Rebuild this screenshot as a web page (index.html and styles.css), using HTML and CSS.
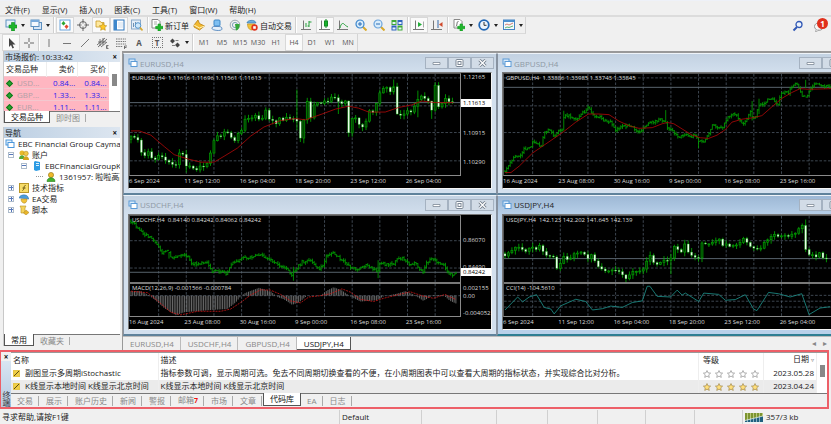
FILE: index.html
```html
<!DOCTYPE html>
<html lang="zh-CN">
<head>
<meta charset="utf-8">
<title>EBC Financial Group</title>
<link rel="stylesheet" href="styles.css">
</head>
<body>
<nav class="menubar">
  <button>文件(F)</button><button>显示(V)</button><button>插入(I)</button><button>图表(C)</button><button>工具(T)</button><button>窗口(W)</button><button>帮助(H)</button>
</nav>
<div class="toolrow">
  <div class="tools">
    <button class="tool drop" aria-label="新图表"><svg viewBox="0 0 12 12"><rect x="1" y="1" width="9" height="7" fill="#e8f2fb" stroke="#5b8fc0"/><path d="M6.500 3.500h3v2.500H12v3H9.500V12h-3V9H4V6h2.500z" fill="#1fb52c" stroke="#0b8a1c" stroke-width=".6"/></svg></button>
    <button class="tool drop" aria-label="模板"><svg viewBox="0 0 12 12"><rect x="3.500" y="3.500" width="8" height="7" fill="#d6e6f7" stroke="#5b8fc0"/><rect x="1" y="1" width="8" height="6.500" fill="#f3f8fd" stroke="#5b8fc0"/><path d="M1 1h8v2H1z" fill="#78aadb"/></svg></button>
    <i class="sep"></i>
    <button class="tool on" aria-label="市场报价"><svg viewBox="0 0 12 12"><rect x="1" y="1" width="10" height="10" fill="#fff" stroke="#69a3dc"/><path d="M2.500 4.500l2-2.500 2 2.500-2 2z" fill="#2aa52f"/><path d="M5.500 7.500l2-2 2 2-2 2.500z" fill="#e2482d"/></svg></button>
    <button class="tool" aria-label="数据窗口"><svg viewBox="0 0 12 12" fill="none" stroke="#666"><circle cx="6" cy="6" r="3.500"/><path d="M6 0v4.500M6 7.500V12M0 6h4.500M7.500 6H12"/></svg></button>
    <button class="tool on" aria-label="导航"><svg viewBox="0 0 12 12"><path d="M1 2h4l1 1.500h3V8H1z" fill="#ffe9a0" stroke="#c89b25" stroke-width=".8"/><path d="M8 4l1.200 2.500 2.500.3-1.900 1.800.5 2.700L8 10l-2.300 1.300.5-2.700L4.300 6.800l2.500-.3z" fill="#ffc926" stroke="#b98a10" stroke-width=".6"/></svg></button>
    <button class="tool on" aria-label="终端"><svg viewBox="0 0 12 12"><rect x="1" y="1" width="10" height="10" fill="#fff" stroke="#2e76bd"/><path d="M1 1h3v10H1z" fill="#3d87cc"/><path d="M5 4h5M5 6h5M5 8h5" stroke="#b9cfe6" stroke-width=".7"/></svg></button>
    <button class="tool" aria-label="策略测试"><svg viewBox="0 0 12 12"><rect x=".5" y="1" width="9" height="9" fill="#e5eef8" stroke="#8aa9c9"/><path d="M2.500 8V4M4.500 8V3" stroke="#7090b0"/><circle cx="7" cy="6.500" r="2.800" fill="#cfe8fb" stroke="#5695cc"/><path d="M9 8.500l2.500 3" stroke="#d8a92c" stroke-width="1.600"/></svg></button>
    <i class="sep"></i>
    <button class="tool label"><svg viewBox="0 0 12 12"><path d="M1 .5h6l2 2V9H1z" fill="#fff" stroke="#888"/><path d="M3 3h3M3 5h3" stroke="#888" stroke-width=".7"/><path d="M7 5h2.500v2.300H12v2.400H9.500V12H7V9.700H4.700V7.300H7z" fill="#1fb52c" stroke="#129a20" stroke-width=".6"/></svg>新订单</button>
    <button class="tool" aria-label="语言编辑器"><svg viewBox="0 0 12 12"><path d="M1 6l4-5 1.500 3.500L11.500 7 6.500 11 1 8z" fill="#f2b930" stroke="#b77f13" stroke-width=".8"/><path d="M1 6l5.500 3 5-2" fill="none" stroke="#fff2b8"/></svg></button>
    <button class="tool" aria-label="社区"><svg viewBox="0 0 12 12"><rect x="3" y="1" width="6" height="6" rx="1" fill="#7fc0f2" stroke="#3f88c7"/><path d="M1 9.500C1 7 3 7.500 6 7.500s5 0 5 2.500-10 1.500-10-.5z" fill="#e5f0fa" stroke="#3f78b7" stroke-width=".8"/></svg></button>
    <button class="tool" aria-label="信号"><svg viewBox="0 0 12 12" fill="none"><circle cx="6" cy="6" r="4.800" stroke="#9aa7b0"/><circle cx="6" cy="6" r="2.600" stroke="#7aa5b8"/><path d="M6 5l1 6.500C9.500 11 11 8 10.500 5z" fill="#35a83b"/></svg></button>
    <button class="tool label auto"><svg viewBox="0 0 12 12"><path d="M1 4c0-3 8-4 9 0z" fill="#6fb1e0" stroke="#3679ad" stroke-width=".7"/><path d="M1.500 5c0 4 2 6 4.500 6l3-6z" fill="#f2c33a" stroke="#b98a17" stroke-width=".6"/><circle cx="8.500" cy="8.500" r="3.200" fill="#e0351f"/><rect x="7.200" y="7.200" width="2.600" height="2.600" fill="#fff"/></svg>自动交易</button>
    <i class="sep"></i>
    <button class="tool" aria-label="柱状图"><svg viewBox="0 0 12 12" fill="none" stroke="#777"><path d="M2.500 1.500v9M0 10.500h10"/><path d="M5 8V4M8 2v6M8 3h2.500M8 7H6.500" stroke="#25a03a"/></svg></button>
    <button class="tool on" aria-label="蜡烛图"><svg viewBox="0 0 12 12" fill="none" stroke="#777"><path d="M2.500 1.500v9M0 10.500h11"/><path d="M7 0v9" stroke="#128a22"/><rect x="5.500" y="2" width="3" height="5" fill="#19b32c" stroke="#128a22"/></svg></button>
    <button class="tool" aria-label="折线图"><svg viewBox="0 0 12 12" fill="none" stroke="#777"><path d="M2.500 1.500v9M0 10.500h11"/><path d="M3 9c1-5 3-5 4-4s2 2 4 3" stroke="#25a03a"/></svg></button>
    <button class="tool" aria-label="放大"><svg viewBox="0 0 12 12"><path d="M7.500 7.500l4 4" stroke="#d8a92c" stroke-width="2"/><circle cx="5" cy="5" r="4" fill="#d8ecfb" stroke="#3c86cc" stroke-width="1.200"/><path d="M3 5h4M5 3v4" stroke="#2b6cb5"/></svg></button>
    <button class="tool" aria-label="缩小"><svg viewBox="0 0 12 12"><path d="M7.500 7.500l4 4" stroke="#d8a92c" stroke-width="2"/><circle cx="5" cy="5" r="4" fill="#d8ecfb" stroke="#6ba4dc" stroke-width="1.200"/><path d="M3 5h4" stroke="#2b6cb5"/></svg></button>
    <button class="tool" aria-label="平铺窗口"><svg viewBox="0 0 12 12"><path d="M.5 1h5v5h-5zM6.500 6.500h5v5h-5z" fill="#3faa36"/><path d="M6.500 1h5v5h-5zM.5 6.500h5v5h-5z" fill="#2f65bd"/><path d="M1.500 3h3v2h-3zM7.500 3h3v2h-3zM1.500 8.500h3v2h-3zM7.500 8.500h3v2h-3z" fill="#e8f3fb"/></svg></button>
    <i class="sep"></i>
    <button class="tool on" aria-label="自动滚动"><svg viewBox="0 0 12 12" fill="none" stroke="#777"><path d="M2.500 1.500v9M0 10.500h11"/><path d="M10.500 2.500v6" stroke="#aaa"/><path d="M5 3l4 2.500L5 8z" fill="#23ad38" stroke="none"/></svg></button>
    <button class="tool" aria-label="图表平移"><svg viewBox="0 0 12 12" fill="none" stroke="#777"><path d="M2.500 1.500v9M0 10.500h11"/><path d="M7 1v8" stroke="#3469a8"/><path d="M11.500 3L8 5.500 11.500 8z" fill="#d0482a" stroke="none"/></svg></button>
    <i class="sep"></i>
    <button class="tool drop" aria-label="指标"><svg viewBox="0 0 12 12"><path d="M1 .5h6l2 2V9H1z" fill="#fff" stroke="#888"/><path d="M5.500 2.500C3.500 2 4.500 6 3 7.500" fill="none" stroke="#444" stroke-width=".8"/><path d="M7 5h2.500v2.300H12v2.400H9.500V12H7V9.700H4.700V7.300H7z" fill="#1fb52c" stroke="#129a20" stroke-width=".6"/></svg></button>
    <button class="tool drop" aria-label="周期"><svg viewBox="0 0 12 12"><circle cx="6" cy="6" r="4.800" fill="#edf5fc" stroke="#2167b5" stroke-width="1.800"/><path d="M6 3v3.300h2.500" fill="none" stroke="#333"/></svg></button>
    <button class="tool drop" aria-label="模板列表"><svg viewBox="0 0 12 12"><rect x=".5" y="1" width="11" height="9.500" fill="#f4f8fc" stroke="#4584c2"/><path d="M.5 1h11v2H.5z" fill="#4b8fce"/><path d="M2 6l2-1 2 1 4-2" fill="none" stroke="#c5604a" stroke-width=".8"/><path d="M2 9l2-1 2 .5L10 7" fill="none" stroke="#38a04b" stroke-width=".8"/></svg></button>
  </div>
  <div class="right-tools">
    <button class="tool" aria-label="搜索"><svg viewBox="0 0 12 12"><circle cx="7" cy="4.500" r="3" fill="#eef4fd" stroke="#3158b5" stroke-width="1.300"/><path d="M5 7L1.500 10.500" stroke="#3158b5" stroke-width="2"/></svg></button>
    <button class="tool chat" aria-label="消息"><svg viewBox="0 0 12 12"><ellipse cx="5" cy="6.500" rx="4.500" ry="3.800" fill="#f7f7f7" stroke="#999"/><path d="M2 9.500L1.500 12 5 10" fill="#eee" stroke="#999" stroke-width=".7"/></svg><b class="badge">1</b></button>
  </div>
</div>
<div class="toolrow second">
  <div class="tools">
    <button class="tool on" aria-label="光标"><svg viewBox="0 0 12 12"><path d="M4 1v9l2-2 1.500 3.500 1.500-.7L7.500 7.500h3z" fill="#444"/></svg></button>
    <button class="tool" aria-label="十字准线"><svg viewBox="0 0 12 12" stroke="#666"><path d="M6 1v4M6 7v4M1 6h4M7 6h4"/></svg></button>
    <i class="sep thin"></i>
    <button class="tool" aria-label="垂直线"><svg viewBox="0 0 12 12" stroke="#777"><path d="M6 2v8"/></svg></button>
    <button class="tool" aria-label="水平线"><svg viewBox="0 0 12 12" stroke="#777"><path d="M2 6.500h8"/></svg></button>
    <button class="tool" aria-label="趋势线"><svg viewBox="0 0 12 12" stroke="#777"><path d="M2 10l8-8"/></svg></button>
    <button class="tool" aria-label="等距通道"><svg viewBox="0 0 12 12" stroke="#555" fill="none"><path d="M0 8l8-7M1 10l9-8M4 10l6-5M3 2v7M6 1v7M1 5h8" stroke-width=".8"/><path d="M11.500 8.500h-2v3h2M9.500 10h1.500" stroke-width=".8"/></svg></button>
    <button class="tool" aria-label="斐波纳契"><svg viewBox="0 0 12 12" stroke="#777" fill="none"><path d="M1 2h10M1 4.500h10M1 7h10M1 9.500h7" stroke-dasharray="1.500 .8"/><path d="M9.500 12V9H12M9.500 10.500h2" stroke="#555" stroke-width=".8"/></svg></button>
    <button class="tool bold">A</button>
    <button class="tool boxed" aria-label="文字标签"><span>T</span></button>
    <button class="tool drop" aria-label="箭头"><svg viewBox="0 0 12 12"><path d="M1 4l2.500-2.500L6 4 3.500 6.500zM6 8l2.500-2.500L11 8l-2.500 2.500z" fill="#444"/><path d="M6.500 3.500h3M3 8.500h3" stroke="#666" stroke-width=".8"/></svg></button>
    <i class="sep"></i>
    <button class="tool per">M1</button><button class="tool per">M5</button><button class="tool per">M15</button><button class="tool per">M30</button><button class="tool per">H1</button><button class="tool per on">H4</button><button class="tool per">D1</button><button class="tool per">W1</button><button class="tool per">MN</button>
  </div>
</div>

<main class="workspace">
  <aside class="side">
    <section class="panel">
      <h2>市场报价: 10:33:42<button aria-label="关闭">×</button></h2>
      <div class="quotes">
        <table>
          <thead><tr><th>交易品种</th><th class="num">卖价</th><th class="num">买价</th></tr></thead>
          <tbody>
            <tr><td><i class="up"></i>USD...</td><td class="num">0.84...</td><td class="num">0.84...</td></tr>
            <tr><td><i class="up"></i>GBP...</td><td class="num">1.33...</td><td class="num">1.33...</td></tr>
            <tr><td><i class="up"></i>EUR...</td><td class="num">1.11...</td><td class="num">1.11...</td></tr>
          </tbody>
        </table>
        <i class="thumb"></i>
      </div>
      <div class="tabs"><button class="tab active">交易品种</button><button class="tab">即时图</button></div>
    </section>
    <section class="panel nav">
      <h2>导航<button aria-label="关闭">×</button></h2>
      <ul class="tree">
        <li><svg viewBox="0 0 10 10"><rect x="1" y="1" width="6" height="5" fill="#e2f0fc" stroke="#4b96da"/><rect x="3" y="3.500" width="6" height="5" fill="#fff" stroke="#4b96da"/></svg>EBC Financial Group Cayman</li>
        <li class="l1"><i class="box minus"></i><svg viewBox="0 0 10 10"><circle cx="3" cy="3" r="2.500" fill="#e9b92b"/><path d="M0 9c0-5 6-5 6 0z" fill="#56a834"/><circle cx="7" cy="3.500" r="2.300" fill="#f3c845" stroke="#a77b10" stroke-width=".5"/><path d="M4 10c0-5 6-5 6 0z" fill="#d6a21e"/></svg>账户</li>
        <li class="l2"><i class="box minus"></i><svg viewBox="0 0 10 10"><path d="M3 0l5 1v8l-4 1-2-1V1z" fill="#2c9be3"/><path d="M4 2.500h3M4 4.500h3" stroke="#d7effd"/></svg>EBCFinancialGroupKY</li>
        <li class="l3"><i class="branch"></i><svg viewBox="0 0 10 10"><circle cx="5" cy="3" r="2.600" fill="#eeb92c" stroke="#93720e" stroke-width=".6"/><path d="M1 9.500C1 4.500 9 4.500 9 9.500z" fill="#43b02f" stroke="#257b18" stroke-width=".6"/></svg>1361957: 啦啦高高</li>
        <li class="l1"><i class="box plus"></i><svg viewBox="0 0 10 10"><rect x=".5" y=".5" width="9" height="9" fill="#f6dc68" stroke="#b99727"/><path d="M6.500 2.500C4.500 2 5.500 7 3.500 7.500M3.500 5h3" fill="none" stroke="#6b5814"/></svg>技术指标</li>
        <li class="l1"><i class="box plus"></i><svg viewBox="0 0 10 10"><path d="M0 4c1-4 8-4 9-1l1 2z" fill="#4b9cd8" stroke="#2b6fa5" stroke-width=".5"/><path d="M2 5h6c0 6-6 5-6 0z" fill="#f2c33a" stroke="#a8801c" stroke-width=".5"/></svg>EA交易</li>
        <li class="l1"><i class="box plus"></i><svg viewBox="0 0 10 10"><path d="M1 1h6l-1 2v5H2V3z" fill="#f5d35c" stroke="#b38e1e" stroke-width=".6"/><path d="M7 5l3 2.500L7 10 4.500 8z" fill="#e8b52a" stroke="#a8801c" stroke-width=".5"/></svg>脚本</li>
      </ul>
      <div class="tabs"><button class="tab active">常用</button><button class="tab">收藏夹</button></div>
    </section>
  </aside>

  <div class="desk">
    <div class="windows" id="windows"></div>
    <div class="charttabs"><button>EURUSD,H4</button><button>USDCHF,H4</button><button>GBPUSD,H4</button><button class="active">USDJPY,H4</button><span class="arrows"><i>◂</i><i>▸</i></span></div>
  </div>
</main>

<section class="terminal">
  <div class="grip"><button aria-label="关闭">×</button><span>终端</span></div>
  <div class="termbody">
    <div class="codebase">
      <table>
        <thead><tr><th class="c1">名称</th><th>描述</th><th class="c3">等级</th><th class="c4">日期 <small>▿</small></th></tr></thead>
        <tbody>
          <tr><td><i class="code"></i>副图显示多周期iStochastic</td><td>指标参数可调，显示周期可选。免去不同周期切换查看的不便，在小周期图表中可以查看大周期的指标状态，并实现综合比对分析。</td><td class="stars" data-full="0"></td><td class="c4">2023.05.28</td></tr>
          <tr><td><i class="code"></i>K线显示本地时间 K线显示北京时间</td><td>K线显示本地时间 K线显示北京时间</td><td class="stars" data-full="1"></td><td class="c4">2023.04.24</td></tr>
        </tbody>
      </table>
      <i class="thumb"></i>
    </div>
    <div class="tabs"><button class="tab">交易</button><button class="tab">展示</button><button class="tab">账户历史</button><button class="tab">新闻</button><button class="tab">警报</button><button class="tab mail">邮箱<b>7</b></button><button class="tab">市场</button><button class="tab">文章</button><button class="tab active">代码库</button><button class="tab">EA</button><button class="tab">日志</button></div>
  </div>
</section>

<footer class="status">
  <span>寻求帮助,请按F1键</span><span>Default</span><span></span><span></span><span></span><span></span><span></span><span></span>
  <span class="net"><svg viewBox="0 0 18 9"><path d="M0 0h18v9H0z" fill="#b9c77a"/><path d="M1 0v9M4 0v9M7 0v9M10 0v9M13 0v9M16 0v9" stroke="#7c9430" stroke-width="2"/><path d="M0 9V7.500L18 3v6z" fill="#1f6080"/><path d="M0 7.500L18 3" stroke="#e8f0e0" stroke-width=".8"/><path d="M2.500 6v3M5.500 5v4M8.500 5v4M11.500 4v5M14.500 3v6" stroke="#b9d4e0" stroke-width=".7"/></svg>357/3 kb</span>
</footer>
<script src="charts.js"></script>
</body>
</html>
```
FILE: styles.css
```css
* { box-sizing: border-box; }
body {
  margin: 0;
  height: 100vh;
  min-height: 424px;
  display: flex;
  flex-direction: column;
  overflow: hidden;
  background: #f0f0f0;
  color: #222;
  font: 8px/11px "Open Sans", "Noto Sans CJK SC", sans-serif;
}
button {
  font: inherit;
  color: inherit;
  background: none;
  border: 0;
  padding: 0;
  margin: 0;
  white-space: nowrap;
}
table { border-collapse: collapse; }
i { font-style: normal; }

.menubar {
  display: flex;
  gap: 12px;
  height: 17px;
  flex: none;
  padding: 2px 5px 0;
  border-bottom: 2px solid #dcdcdc;
  border-top: 1px solid #eef1f8;
}
.toolrow {
  display: flex;
  justify-content: space-between;
  height: 17px;
  flex: none;
}
.tools {
  display: flex;
  align-items: stretch;
  padding-left: 2px;
  border-right: 1px solid #d4d4d4;
  border-bottom: 1px solid #dadada;
}
.second .tools { border-bottom: 0; }
.tool {
  width: 18px;
  display: flex;
  align-items: center;
  justify-content: center;
  gap: 2px;
  border: 1px solid transparent;
  position: relative;
}
.tool svg { width: 12px; height: 12px; flex: none; }
.tool.on { background: #fafafa; border-color: #d8d8d8; }
.tool.drop { width: 25px; gap: 4px; }
.tool.drop::after {
  content: "";
  border: 2px solid transparent;
  border-top: 3px solid #222;
  border-bottom: 0;
}
.tool.label { width: 40px; }
.tool.auto { width: 50px; }
.sep { width: 2px; margin: 0 1px; border-left: 1px solid #d0d0d0; border-right: 1px solid #fff; }
.sep.thin { margin: 0; }
.per { font-size: 7px; color: #555; }
.bold { font-weight: 700; color: #555; }
.boxed span { border: 1px dotted #777; line-height: 9px; width: 11px; font-weight: 700; color: #555; }
.right-tools { display: flex; gap: 4px; padding-right: 2px; }
.badge {
  position: absolute;
  top: 0;
  right: 0;
  width: 11px;
  height: 11px;
  border-radius: 50%;
  background: #e0301c;
  color: #fff;
  font-size: 8px;
  line-height: 11px;
}

.workspace { flex: 1; min-height: 0; display: grid; grid-template-columns: 122px minmax(0, 1fr); }
.side { display: flex; flex-direction: column; gap: 4px; padding: 0 2px 4px 3px; min-height: 0; }
.panel { display: flex; flex-direction: column; background: #fff; border-left: 1px solid #c8c8c8; overflow: hidden; flex: none; }
.panel.nav { flex: 1; }
.panel h2 {
  margin: 0;
  display: flex;
  justify-content: space-between;
  padding: 0 3px 0 1px;
  font: inherit;
  line-height: 11px;
  height: 11px;
  flex: none;
  background: linear-gradient(90deg, #bccfe3, #dde6f0);
}
.panel h2 button, .grip button { font-weight: 700; color: #111; line-height: 10px; }
.quotes { display: flex; height: 49px; overflow: hidden; }
.quotes table { width: 105px; table-layout: fixed; }
.quotes th { font-weight: 400; text-align: left; padding: 0 2px; height: 14px; line-height: 13px; white-space: nowrap; border-right: 1px solid #eee; }
.quotes th:first-child { width: 42px; }
.quotes td { padding: 0 2px; height: 12px; line-height: 11px; background: #ffb6c1; color: #b3a0a6; white-space: nowrap; border-top: 1px solid #f3c8cf; }
.quotes td.num { color: #2a1cf0; }
.quotes .num { text-align: right; }
.up { display: inline-block; width: 5px; height: 5px; margin: 0 5px 0 1px; background: #27a52f; border: 1px solid #13761b; transform: rotate(45deg); }
.thumb { width: 5px; height: 12px; background: #888; margin: 12px 0 0 3px; flex: none; }
.tabs { display: flex; height: 12px; flex: none; background: #f0f0f0; border-top: 1px solid #777; }
.tab { padding: 0 6px; color: #888; position: relative; line-height: 11px; border-right: 1px solid transparent; }
.tab:not(.active)::after { content: ""; position: absolute; right: 0; top: 2px; bottom: 1px; border-right: 1px solid #aaa; }
.tab.active { background: #fff; color: #111; border: 1px solid #555; border-top: 0; margin-top: -1px; }

.tree { list-style: none; margin: 0; padding: 0 0 0 1px; flex: 1; overflow: hidden; }
.tree li { display: flex; align-items: center; height: 11px; white-space: nowrap; gap: 3px; }
.tree svg { width: 10px; height: 10px; flex: none; }
.l1 { padding-left: 3px; }
.l2 { padding-left: 16px; }
.l3 { padding-left: 31px; }
.box { flex: none; width: 6px; height: 6px; border: 1px solid #aebccb; margin-right: 2px; background: linear-gradient(#57b, #57b) center / 4px 1px no-repeat; }
.box.plus { background: linear-gradient(#57b, #57b) center / 4px 1px no-repeat, linear-gradient(#57b, #57b) center / 1px 4px no-repeat; }
.branch { flex: none; width: 7px; border-top: 1px dotted #999; }

.desk { display: flex; flex-direction: column; border-left: 1px solid #999; min-width: 0; }
.windows {
  flex: 1;
  min-height: 0;
  display: grid;
  grid-template-columns: repeat(2, minmax(374px, 1fr));
  grid-template-rows: repeat(2, minmax(0, 1fr));
  border-top: 2px solid #999;
  overflow: hidden;
  background: #999;
}
.win {
  display: flex;
  flex-direction: column;
  min-height: 0;
  padding: 0 4px 4px;
  border: 1px solid #8792a0;
  border-top-color: #eef3f8;
  border-bottom: 2px solid #5f829b;
  background: linear-gradient(#c3d2e2, #d3e0ee 20px);
}
.win.current { background: linear-gradient(#9db8d5, #b9d1ea 20px); border-bottom-color: #2f7f93; }
.caption { display: flex; align-items: center; gap: 2px; height: 18px; flex: none; color: #8f99a5; }
.current .caption { color: #222; }
.caption > svg { width: 10px; height: 10px; }
.caption h3 { margin: 0 auto 0 0; font: inherit; }
.winbtn { width: 23px; height: 12px; border: 1px solid #a5b2c1; background: #d2dce7; margin-right: -2px; display: grid; place-items: center; }
.winbtn svg { width: 9px; height: 8px; }
.chart {
  flex: 1;
  min-height: 0;
  display: grid;
  grid-template-columns: minmax(0, 1fr) 30px;
  grid-template-rows: minmax(0, 1fr) 12px;
  background: #000;
  color: #ddd;
  font-size: 6px;
  line-height: 8px;
  border: 1px solid #777;
  border-right-color: #f4f4f4;
  border-bottom-color: #f4f4f4;
}
.plot { position: relative; border: 1px solid #8a8a8a; border-top-color: #555; border-left-color: #555; min-height: 0; }
.plot svg { position: absolute; inset: 0; width: 100%; height: 100%; }
.plot p { position: absolute; margin: 0; left: 2px; top: 0; white-space: pre; }
.scale { position: relative; }
.scale span { position: absolute; left: 2px; transform: translateY(-50%); }
.scale .now { left: 0; right: 0; padding-left: 2px; background: #fff; color: #000; }
.times { display: grid; grid-template-columns: repeat(6, minmax(0, 1fr)); white-space: nowrap; padding-top: 1px; }

.charttabs { display: flex; height: 14px; flex: none; border-top: 1px solid #bbb; }
.charttabs button { padding: 0 6px 0 7px; color: #888; border-right: 1px solid #bbb; line-height: 11px; }
.charttabs .active { color: #111; background: #fff; border-right-color: #555; border-bottom: 1px solid #555; }
.arrows { margin-left: auto; padding-right: 4px; color: #888; display: flex; gap: 7px; }

.terminal { display: flex; height: 59px; flex: none; margin-right: 2px; border: 2px solid #ed5f68; border-left-width: 1px; }
.grip { width: 10px; flex: none; display: flex; flex-direction: column; align-items: center; overflow: hidden; background: linear-gradient(#f0f0f0 9px, #d9e5f2 9px, #b4cae2); }
.grip span { margin-top: auto; writing-mode: vertical-rl; line-height: 8px; color: #333; }
.termbody { flex: 1; min-width: 0; display: flex; flex-direction: column; }
.codebase { flex: 1; min-height: 0; display: flex; overflow: hidden; background: #fff; border-top: 1px solid #999; }
.codebase table { flex: 1; width: 100%; table-layout: fixed; }
.codebase th, .codebase td { font-weight: 400; text-align: left; height: 13px; padding: 0 2px; line-height: 12px; border-right: 1px solid #eee; white-space: nowrap; overflow: hidden; }
.codebase tr:last-child td { background: #ebebeb; }
.codebase .c1 { width: 147px; }
.codebase .c3 { width: 65px; padding-left: 4px; }
.codebase .stars { padding-left: 4px; }
.codebase .c4 { width: 53px; text-align: right; }
.codebase thead tr:last-child th { background: #fff; }
.codebase small { font-size: 6px; color: #777; }
.codebase .thumb { margin: 12px 2px 0 3px; }
.code { display: inline-block; width: 7px; height: 7px; margin-right: 5px; vertical-align: -1px; background: linear-gradient(135deg, #f0cf45 45%, #5d4d12 45%, #5d4d12 55%, #f0cf45 55%); border: 1px solid #e6c548; }
.stars svg { width: 8px; height: 8px; margin-right: 4px; vertical-align: middle; }
.terminal .tabs { height: 14px; }
.terminal .tab { line-height: 12px; }
.terminal .tab.active { height: 13px; }
.tab.mail b { color: #e11; font-size: 7px; }

.status { flex: none; height: 15px; display: grid; grid-template-columns: 340fr 82fr 75fr 51fr 50fr 48fr 49fr 48fr 88fr; padding-top: 1px; }
.status span { padding-left: 2px; border-right: 1px solid #d0d0d0; line-height: 14px; white-space: nowrap; }
.status .net { display: flex; align-items: center; gap: 3px; border: 0; }
.net svg { width: 18px; height: 9px; }
```
FILE: charts.js
```js
// Plot coordinates use three units per pixel; x starts at the left edge of the plot.
const STEP = 10.4;
const AUG = ['16 Aug 2024', '23 Aug 08:00', '30 Aug 16:00', '9 Sep 00:00', '16 Sep 08:00', '23 Sep 16:00'];
const SEP = ['6 Sep 2024', '11 Sep 12:00', '16 Sep 04:00', '18 Sep 20:00', '23 Sep 12:00', '26 Sep 04:00'];

const charts = [
  {
    name: 'EURUSD,H4', values: '1.11616 1.11696 1.11561 1.11613', times: SEP,
    box: [27, 67, 993, 309], x0: 30, rows: [79, 165, 247, 334], now: 155,
    scale: [[79, '1.12165'], [165, '1.11540'], [247, '1.10915'], [334, '1.10290'], [156, '1.11613', 1]],
    open: 268, spikes: { 48: [115, 240], 16: [300, 370], 76: [84, 130], 60: [130, 190], 63: [148, 260], 83: [118, 200], 50: [205, 280], 87: [150, 205] },
    candles: [258,262,270,308,318,306,325,330,318,322,332,338,345,346,310,314,350,350,357,362,350,352,342,310,272,257,258,245,248,262,272,250,240,206,204,202,195,206,203,178,206,210,220,202,210,200,204,205,212,264,208,152,202,162,155,158,150,152,138,140,152,158,150,248,204,202,222,230,212,180,185,158,125,112,108,122,106,190,194,190,180,184,166,145,135,142,150,178,102,168,158,142,152,155],
    ma: [30,242,55,242,90,255,130,290,160,315,200,328,240,338,280,338,310,320,350,295,390,258,430,230,480,210,525,204,555,208,605,190,645,175,685,166,715,172,745,184,795,184,835,170,875,162,905,150,945,155,1000,155]
  },
  {
    name: 'GBPUSD,H4', values: '1.33886 1.33985 1.33743 1.33845', times: AUG,
    box: [24, 67, 993, 309], x0: 27, rows: [79, 165, 247, 334], now: 108, scale: [],
    spikes: { 34: [180, 240], 93: [178, 215], 112: [262, 295], 143: [150, 210], 147: [143, 190], 174: [85, 110] },
    bars: [27,365,40,345,55,322,72,318,82,300,100,296,110,278,120,278,135,290,145,250,158,240,165,246,175,258,190,240,200,238,205,186,215,195,230,200,245,205,255,190,268,182,276,170,290,190,300,205,312,195,325,212,345,215,360,238,375,232,395,225,410,232,428,245,440,240,452,225,470,215,490,208,508,210,515,235,530,235,540,255,555,260,570,250,585,262,600,252,610,275,625,275,640,255,650,225,665,230,685,228,695,200,710,190,725,192,738,218,750,215,765,185,778,210,792,160,805,160,825,140,848,160,860,125,880,125,895,98,905,92,918,130,932,138,945,120,955,95,975,105,1000,105,1017,110],
    ma: [27,370,45,370,70,350,110,310,150,282,200,247,240,215,278,190,310,190,340,192,370,212,400,226,430,234,470,232,500,220,515,216,535,220,560,236,590,255,615,263,640,265,665,255,690,238,710,215,740,206,770,202,800,195,830,168,860,142,890,124,915,112,940,114,1017,112]
  },
  {
    name: 'USDCHF,H4', values: '0.84140 0.84242 0.84062 0.84242', times: AUG,
    box: [27, 69, 993, 309], x0: 30, rows: [145, 229], now: 242, split: 275,
    sub: 'MACD(12,26,9) -0.001566 -0.000784', subRows: [314],
    scale: [[145, '0.86070'], [227, '0.84490'], [290, '0.002155'], [314, '0.00'], [366, '-0.004052'], [242, '0.84242', 1]],
    spikes: { 94: [225, 268], 143: [205, 260], 22: [180, 200] },
    bars: [32,85,45,100,60,115,75,128,90,138,105,150,118,178,130,182,140,175,150,195,165,195,180,192,200,192,210,213,225,218,245,215,262,215,275,240,290,240,305,238,318,250,328,220,345,210,365,200,385,198,400,190,412,188,430,195,450,205,470,218,490,225,505,240,515,250,530,228,545,210,565,207,580,215,598,235,610,215,618,192,635,182,650,192,665,208,680,215,695,230,715,232,735,220,755,230,772,240,780,215,800,218,820,215,830,200,850,198,865,215,885,215,900,235,910,242,920,210,940,200,955,215,970,215,980,240,995,250,1008,245],
    hist: [30,300,60,300,85,314,100,325,130,352,165,374,190,365,225,362,270,358,320,355,345,335,362,314,375,305,415,290,450,300,470,318,490,325,515,342,535,335,560,314,600,314,620,298,640,288,665,298,690,316,720,332,770,328,790,316,830,308,855,300,880,310,910,330,940,312,970,312,990,330,1008,338],
    signal: [30,300,80,305,110,330,150,365,180,373,230,362,300,362,330,355,360,335,390,312,420,296,450,297,480,310,510,330,540,336,565,318,600,314,630,308,665,293,690,303,720,325,760,332,790,322,830,312,870,302,905,314,940,322,975,310,1008,326]
  },
  {
    name: 'USDJPY,H4', values: '142.123 142.202 141.645 142.139', times: SEP, current: true,
    box: [24, 69, 993, 309], x0: 27, rows: [145, 229], now: 200, split: 275,
    sub: 'CCI(14) -104.5610', subRows: [313, 331, 349], scale: [],
    open: 185, spikes: { 48: [185, 248], 86: [92, 122], 87: [80, 180], 56: [190, 210], 15: [190, 235] },
    candles: [192,182,175,165,165,172,178,168,165,172,160,178,190,192,195,230,215,193,203,198,185,183,180,187,200,188,207,225,232,238,238,235,236,240,250,262,250,240,240,238,232,208,190,212,218,212,205,206,198,163,172,180,155,180,190,196,198,152,155,155,150,145,140,160,155,163,160,158,150,138,150,163,168,170,168,150,142,132,126,132,130,128,132,125,122,108,98,172,188,188,195,182,198,200],
    line: [27,358,65,318,80,333,100,318,122,311,145,350,165,355,175,370,195,345,240,325,270,332,290,358,320,354,345,346,380,350,410,335,440,330,455,285,463,285,485,316,525,318,545,297,560,312,570,306,610,332,625,306,670,310,690,328,720,326,750,311,775,355,785,360,820,304,850,308,885,318,920,308,942,372,975,352,1005,348]
  }
];

let seed = 7;
const rnd = () => (seed = (seed * 16807) % 2147483647) / 2147483647;

function at(points, x) {
  for (let i = 2; i < points.length; i += 2) {
    if (x <= points[i]) {
      const t = (x - points[i - 2]) / (points[i] - points[i - 2]);
      return points[i - 1] + Math.max(0, t) * (points[i + 1] - points[i - 1]);
    }
  }
  return points[points.length - 1];
}
const path = (d, stroke, width = 3, extra = '') => `<path d="${d}" fill="none" stroke="${stroke}" stroke-width="${width}" ${extra}/>`;
const poly = p => 'M' + p.join(' ');

function drawGrid(c) {
  const [x, y, w, h] = c.box;
  let d = '';
  for (let i = 1; i < 12; i++) d += `M${c.x0 + i * 83.2} ${y}V${y + h}`;
  for (const r of c.rows.concat(c.subRows || [])) d += `M${x} ${r}H${x + w}`;
  return path(d, '#4b5661', 2.5, 'stroke-dasharray="8 5"') + path(`M${x} ${c.now}H${x + w}`, '#59656f', 3);
}

function drawCandles(c) {
  let out = '', prev = c.open;
  c.candles.forEach((close, i) => {
    const x = c.x0 + i * STEP;
    const top = Math.min(prev, close), height = Math.max(3, Math.abs(prev - close));
    const [hi, lo] = c.spikes[i] || [top - 2 - rnd() * 11, top + height + 2 + rnd() * 11];
    out += path(`M${x} ${hi}V${lo}`, '#00b400', 2.4);
    const down = close > prev;
    out += `<rect x="${x - 3}" y="${top}" width="6" height="${height}" fill="${down ? '#e9ffe9' : '#003c00'}" stroke="#00a000" stroke-width="${down ? 1 : 2}"/>`;
    prev = close;
  });
  return out;
}

function drawBars(c) {
  let d = '', prev = at(c.bars, c.x0);
  for (let i = 0; c.x0 + i * 5.2 < c.bars[c.bars.length - 2]; i++) {
    const x = c.x0 + i * 5.2;
    const y = at(c.bars, x) + (rnd() - 0.5) * 8;
    const [hi, lo] = c.spikes[i] || [Math.min(prev, y) - rnd() * 7, Math.max(prev, y) + rnd() * 7];
    d += `M${x} ${hi}V${lo}M${x - 3} ${prev}H${x}M${x} ${y}H${x + 3}`;
    prev = y;
  }
  return path(d, '#009c00', 2.6);
}

function drawHistogram(c) {
  let d = '';
  for (let x = c.x0; x < 1010; x += 5.2) d += `M${x} 314V${at(c.hist, x)}`;
  return path(d, '#858585', 2.4);
}

const winIcon = '<svg viewBox="0 0 10 10"><rect x="1" y="1" width="6" height="5" fill="#d8eafa" stroke="#5b9ad6"/><rect x="3" y="3.500" width="6" height="5" fill="#fff" stroke="#5b9ad6"/></svg>';
const buttons = [
  ['最小化', '<path d="M1 3.500h7v2H1z" fill="#fff" stroke="#7c8896" stroke-width=".8"/>'],
  ['最大化', '<rect x="1" y=".5" width="7" height="7" rx="1" fill="#fff" stroke="#7c8896"/><rect x="3" y="2.500" width="3" height="3" fill="#fff" stroke="#7c8896"/>'],
  ['关闭', '<path d="M1.500 1l6 6M7.500 1l-6 6" stroke="#6f7b89" stroke-width="3"/><path d="M1.500 1l6 6M7.500 1l-6 6" stroke="#fff" stroke-width="1.300"/>']
].map(([label, art]) => `<button class="winbtn" aria-label="${label}"><svg viewBox="0 0 9 8">${art}</svg></button>`).join('');

document.getElementById('windows').innerHTML = charts.map(c => {
  const [x, y, w, h] = c.box;
  const pct = v => ((v - y) / h * 100).toFixed(1) + '%';
  let art = drawGrid(c);
  if (c.hist) art += drawHistogram(c);
  if (c.signal) art += path(poly(c.signal), '#d01818', 2.4, 'stroke-dasharray="6 3"');
  if (c.line) art += path(poly(c.line), '#1c8c86', 2.6);
  art += c.candles ? drawCandles(c) : drawBars(c);
  if (c.ma) art += path(poly(c.ma), '#a80808', 2.6, 'stroke-linejoin="round"');
  if (c.split) art += path(`M${x} ${c.split}H${x + w}`, '#a0a0a0', 4);
  return `<section class="win${c.current ? ' current' : ''}">
    <header class="caption">${winIcon}<h3>${c.name}</h3>${buttons}</header>
    <div class="chart">
      <div class="plot">
        <svg viewBox="${c.box.join(' ')}" preserveAspectRatio="none">${art}</svg>
        <p>${c.name}  ${c.values}</p>${c.sub ? `<p style="top:${pct(281)}">${c.sub}</p>` : ''}
      </div>
      <div class="scale">${c.scale.map(([v, t, now]) => `<span${now ? ' class="now"' : ''} style="top:${pct(v)}">${t}</span>`).join('')}</div>
      <div class="times">${c.times.map(t => `<span>${t}</span>`).join('')}</div>
    </div>
  </section>`;
}).join('');

document.querySelectorAll('.stars').forEach(cell => {
  const full = cell.dataset.full === '1';
  const star = `<svg viewBox="0 0 12 12"><path d="M6 .8l1.600 3.500 3.800.4-2.800 2.600.8 3.800L6 9.200l-3.400 1.900.8-3.800L.6 4.700l3.800-.4z" fill="${full ? '#ffdf7a' : '#fff'}" stroke="${full ? '#9c8348' : '#8a8a8a'}"/></svg>`;
  cell.innerHTML = star.repeat(5);
});
```
